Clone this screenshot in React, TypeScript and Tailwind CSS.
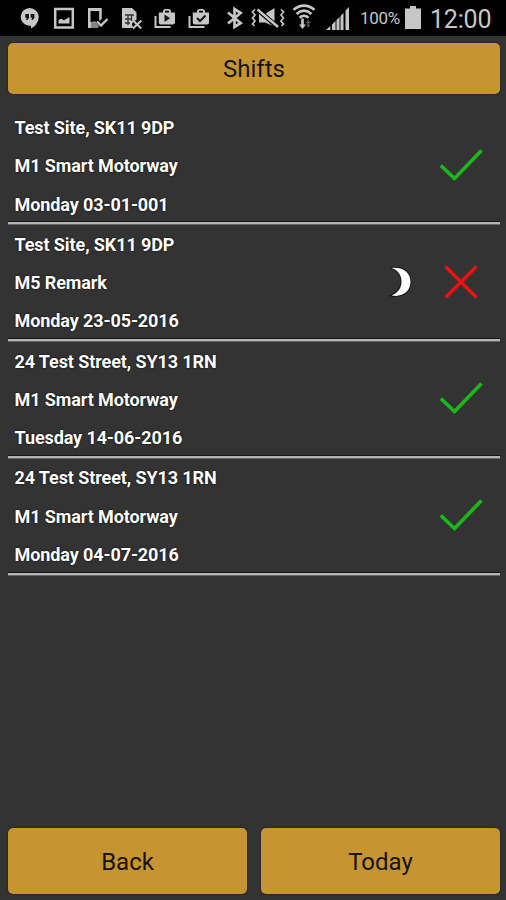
import type { ReactNode } from "react";

type Shift = {
  site: string;
  job: string;
  date: string;
  confirmed: boolean;
  night?: boolean;
};

const shifts: Shift[] = [
  { site: "Test Site, SK11 9DP", job: "M1 Smart Motorway", date: "Monday 03-01-001", confirmed: true },
  { site: "Test Site, SK11 9DP", job: "M5 Remark", date: "Monday 23-05-2016", confirmed: false, night: true },
  { site: "24 Test Street, SY13 1RN", job: "M1 Smart Motorway", date: "Tuesday 14-06-2016", confirmed: true },
  { site: "24 Test Street, SY13 1RN", job: "M1 Smart Motorway", date: "Monday 04-07-2016", confirmed: true },
];

function StatusIcon({ children }: { children: ReactNode }) {
  return (
    <svg viewBox="0 0 34 36" className="h-9 w-[34px] shrink-0 overflow-visible" fill="#c6c6c6">
      {children}
    </svg>
  );
}

function PlayBag({ children }: { children: ReactNode }) {
  return (
    <StatusIcon>
      <path d="M6.500 16V27H21.500" fill="none" stroke="#c6c6c6" strokeWidth="2" />
      <path d="M9.800 12.500H14V11.500Q14 9 16.500 9H19.500Q22 9 22 11.500V12.500H26V22.500Q26 24.500 24 24.500H11.800Q9.800 24.500 9.800 22.500ZM16 12.500H20V10.800H16Z" fillRule="evenodd" />
      {children}
    </StatusIcon>
  );
}

function StatusBar() {
  return (
    <header className="flex h-9 shrink-0 items-center bg-black pl-[13px] text-[#c6c6c6]">
      <StatusIcon>
        <path d="M16.700 8A8.900 8.900 0 0 0 16.500 25.800H18V28.500C22.500 26.500 25.700 21.500 25.700 17A9 9 0 0 0 16.700 8Z" />
        <path d="M12.300 14H16V18L14.200 20H13L13.800 17.800H12.300ZM17.700 14H21.400V18L19.600 20H18.400L19.200 17.800H17.700Z" fill="#151515" />
      </StatusIcon>
      <StatusIcon>
        <rect x="8.200" y="9" width="17.600" height="18.500" fill="none" stroke="#c6c6c6" strokeWidth="2.500" />
        <path d="M11.500 23.500V20L14 18.800L17 20.300L22.500 17V23.500Z" />
      </StatusIcon>
      <StatusIcon>
        <path d="M7 8H20.700V19L18.200 21V11H9.500V22H12L17 28H7Z" />
        <path d="M10 22L14 21L18 26L17 28H10Z" fill="#858585" />
        <path d="M16 21.500L20 25.500L26.500 19" fill="none" stroke="#c6c6c6" strokeWidth="2.300" />
      </StatusIcon>
      <StatusIcon>
        <path d="M7 8H17L21.500 12.500V20L18.500 21L17 24L18 28H7Z" />
        <path d="M10 15H19M10 19H17M10 23H15M13 15V25M16.500 15V21" fill="none" stroke="#343434" strokeWidth="1.300" />
        <path d="M18 20.500L26.300 28.500M26.300 20.500L18 28.500" fill="none" stroke="#c6c6c6" strokeWidth="2" />
      </StatusIcon>
      <PlayBag>
        <path d="M15.500 14.500L21 18.200L15.500 22Z" fill="#111" />
      </PlayBag>
      <PlayBag>
        <path d="M14 18L17 21L22.500 15.500" fill="none" stroke="#111" strokeWidth="2" />
      </PlayBag>
      <StatusIcon>
        <path d="M11 12.500L23.700 23L17.500 27V9L23.700 13L11 23.500" fill="none" stroke="#c6c6c6" strokeWidth="2.700" />
      </StatusIcon>
      <StatusIcon>
        <path d="M8 14H14L23.500 8V26.500L14 22.500H8Z" />
        <path d="M6.500 9.500L26.500 27" stroke="#000" strokeWidth="4.600" />
        <path d="M6.500 9.500L27 27" stroke="#c6c6c6" strokeWidth="2.400" />
        <path d="M4 9.500L1.500 12L4 15L1.500 18L4 21L1.500 24L3.500 26M30 9.500L32.500 12L30 15L32.500 18L30 21L32.500 24L30.500 26" fill="none" stroke="#c6c6c6" strokeWidth="1.700" />
      </StatusIcon>
      <StatusIcon>
        <g fill="none" stroke="#c6c6c6" strokeWidth="2.500">
          <path d="M8.500 9.800Q19 1.500 29.500 9.800" />
          <path d="M11.500 14Q19 7.300 26.500 14" />
          <path d="M14.500 17.800Q19 13.800 23.500 17.800" />
        </g>
        <path d="M16.200 18.500H18.800V24.500H21L17.500 29L14 24.500H16.200Z" />
        <path d="M22 27V23H20.500L23.200 19.500L26 23H24.500V27Z" fill="#4b4b4b" />
      </StatusIcon>
      <StatusIcon>
        <path d="M7 30L11.300 26V30ZM13 24.500L16 21.500V30H13ZM17.500 20L20 17.500V30H17.500ZM21.500 16L24.500 13V30H21.500ZM26.500 10.500L30 7V30H26.500Z" />
        <path d="M16 21.500L17.500 20V30H16ZM20 17.500L21.500 16V30H20Z" fill="#666" />
      </StatusIcon>
      <span className="ml-[7px] w-[44.500px] whitespace-nowrap pt-px text-[17px] leading-none tracking-[-0.300px]">100%</span>
      <svg viewBox="0 0 16 24" className="h-6 w-4 shrink-0" fill="#c6c6c6">
        <path d="M5 0H11V2.500H16V23H0V2.500H5Z" />
      </svg>
      <span className="ml-[9.500px] whitespace-nowrap pt-0.5 text-[25px] leading-none tracking-[-0.200px]">12:00</span>
    </header>
  );
}

function Tick() {
  return (
    <svg viewBox="0 0 44 34" className="h-[34px] w-11" fill="none" stroke="#1bb81b" strokeWidth="3.600">
      <path d="M1.800 17.500L15.500 30.500L42.500 2.500" />
    </svg>
  );
}

function Cross() {
  return (
    <svg viewBox="0 0 44 34" className="h-[34px] w-11" fill="none" stroke="#f01010" strokeWidth="3.400">
      <path d="M6.500 1.500L37.500 32.500M37.500 1.500L6.500 32.500" />
    </svg>
  );
}

function Moon() {
  return (
    <svg viewBox="0 0 20 30" className="h-[30px] w-5 overflow-visible">
      <path
        d="M0.500 1C12 -0.500 19.500 5.500 19.500 14.800C19.500 24.500 11.500 30.500 0.500 28.500C7.500 25.500 10.500 20.500 10.500 14.500C10.500 8.500 7.500 3.500 0.500 1Z"
        fill="#fff"
        stroke="#111"
        strokeWidth="1.800"
        paintOrder="stroke"
      />
    </svg>
  );
}

function ShiftRow({ shift }: { shift: Shift }) {
  return (
    <li className="flex h-[116.800px] items-center justify-between border-b-2 border-[#b5b5b5] pl-[6.500px] pr-[17px] shadow-[inset_0_-1px_0_#161616,0_1px_0_#666666]">
      <div className="pt-[3px] text-[18px] font-bold leading-[38.300px] tracking-[-0.100px] text-white [text-shadow:0_0_2px_#000]">
        <p>{shift.site}</p>
        <p>{shift.job}</p>
        <p>{shift.date}</p>
      </div>
      <div className="flex items-center gap-[28px]">
        {shift.night ? <Moon /> : null}
        {shift.confirmed ? <Tick /> : <Cross />}
      </div>
    </li>
  );
}

export default function App() {
  return (
    <div className="flex h-[900px] w-[506px] flex-col overflow-hidden bg-[#333333] font-['Roboto',sans-serif]">
      <StatusBar />
      <main className="flex flex-1 flex-col pb-[6.500px] pl-2 pr-1.5 pt-[6.500px]">
        <h1 className="flex h-[51px] items-center justify-center rounded-[5px] bg-[#c69532] pt-0.5 text-[24px] text-[#17130a] shadow-[0_0_2px_#101820]">
          Shifts
        </h1>
        <ul className="mt-[14px]">
          {shifts.map((shift) => (
            <ShiftRow key={shift.date} shift={shift} />
          ))}
        </ul>
        <div className="mt-auto grid grid-cols-2 gap-[14px] text-[24px] text-[#17130a]">
          <button className="h-[65.500px] rounded-[5px] bg-[#c69532] pt-0.5 shadow-[0_0_2px_#101820]">Back</button>
          <button className="h-[65.500px] rounded-[5px] bg-[#c69532] pt-0.5 shadow-[0_0_2px_#101820]">Today</button>
        </div>
      </main>
    </div>
  );
}
